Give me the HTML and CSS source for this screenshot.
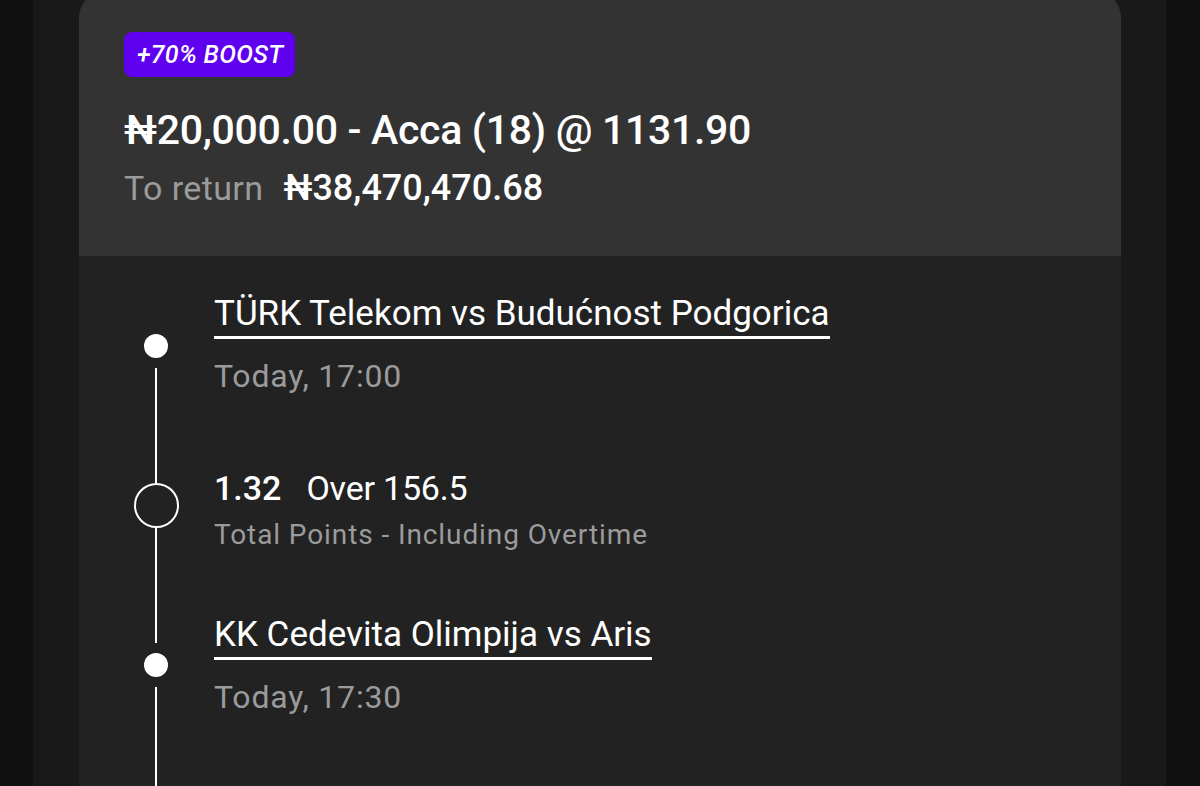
FILE: index.html
```html
<!DOCTYPE html>
<html lang="en">
<head>
<meta charset="utf-8">
<title>Bet receipt</title>
<link rel="stylesheet" href="styles.css">
</head>
<body>
<div class="frame">
  <div class="card">
    <header class="card-head">
      <span class="badge">+70% BOOST</span>
      <h1 class="title">₦20,000.00 - Acca (18) @ 1131.90</h1>
      <p class="return"><span class="return-label">To return</span><span class="return-value">₦38,470,470.68</span></p>
    </header>
    <div class="legs">
      <div class="leg leg-event1">
        <div class="rail">
          <span class="gap gap-top1"></span>
          <span class="dot"></span>
          <span class="gap gap-small"></span>
          <span class="line"></span>
        </div>
        <div class="content content-event1">
          <span class="event">TÜRK Telekom vs Budućnost Podgorica</span>
          <span class="time">Today, 17:00</span>
        </div>
      </div>
      <div class="leg leg-sel">
        <div class="rail">
          <span class="line line-fixed1"></span>
          <span class="ring"></span>
          <span class="line"></span>
        </div>
        <div class="content content-sel">
          <span class="pick"><b class="odds">1.32</b><span class="outcome">Over 156.5</span></span>
          <span class="market">Total Points - Including Overtime</span>
        </div>
      </div>
      <div class="leg leg-event2">
        <div class="rail">
          <span class="line line-fixed2"></span>
          <span class="gap gap-small"></span>
          <span class="dot"></span>
          <span class="gap gap-small"></span>
          <span class="line"></span>
        </div>
        <div class="content content-event2">
          <span class="event">KK Cedevita Olimpija vs Aris</span>
          <span class="time">Today, 17:30</span>
        </div>
      </div>
    </div>
  </div>
</div>
</body>
</html>
```
FILE: styles.css
```css
* { box-sizing: border-box; }
html, body { margin: 0; padding: 0; }
body {
  background: #111111;
  font-family: Roboto, "Liberation Sans", sans-serif;
  color: #ffffff;
  height: 786px;
  overflow: hidden;
}
.frame {
  display: flow-root;
  margin: 0 34px 0 33px;
  background: #191919;
  height: 786px;
  padding: 0 45px 0 46px;
}
.card {
  margin-top: -10px;
  border-radius: 28px 28px 0 0;
  overflow: hidden;
  background: #222222;
  height: 820px;
}
.card-head {
  background: #333333;
  height: 266px;
  padding: 42px 45px 0 45px;
}
.badge {
  display: inline-flex;
  align-items: center;
  height: 45px;
  padding: 0 12px 0 13px;
  background: #5f00ef;
  border-radius: 8px;
  font-style: italic;
  font-weight: 500;
  font-size: 25px;
  letter-spacing: 0.3px;
  color: #ffffff;
}
.title {
  margin: 29px 0 0 0;
  font-size: 41px;
  line-height: 48px;
  font-weight: 500;
  letter-spacing: -0.3px;
}
.return {
  margin: 14px 0 0 0;
  line-height: 40px;
  display: flex;
  align-items: baseline;
  gap: 20px;
}
.return-label { color: #9b9b9b; font-weight: 400; font-size: 34px; letter-spacing: 0.4px; }
.return-value { font-weight: 500; font-size: 36px; letter-spacing: 0; }

.legs { display: flex; flex-direction: column; }
.leg {
  display: grid;
  grid-template-columns: 135px 1fr;
}
.leg-event1 { height: 184px; }
.leg-sel { height: 140px; }
.leg-event2 { height: 240px; }
.rail {
  display: flex;
  flex-direction: column;
  align-items: center;
  padding-left: 19px;
}
.gap { display: block; flex: none; }
.gap-top1 { height: 78px; }
.gap-small { height: 10px; }
.dot {
  display: block;
  flex: none;
  width: 24px;
  height: 24px;
  border-radius: 50%;
  background: #ffffff;
}
.ring {
  display: block;
  flex: none;
  width: 45px;
  height: 45px;
  border-radius: 50%;
  border: 2.5px solid #ffffff;
}
.line {
  display: block;
  flex: 1;
  width: 2px;
  background: #ffffff;
}
.line-fixed1 { flex: none; height: 43px; }
.line-fixed2 { flex: none; height: 63px; }

.content { display: flex; flex-direction: column; align-items: flex-start; }
.event {
  font-size: 35px;
  line-height: 40px;
  padding-bottom: 2px;
  border-bottom: 3px solid #ffffff;
  letter-spacing: 0;
}
.time {
  margin-top: 19px;
  font-size: 32px;
  line-height: 36px;
  color: #9b9b9b;
  letter-spacing: 0.8px;
}
.content-event1 { padding-top: 38px; }
.content-sel { padding-top: 28px; }
.pick { font-size: 34px; line-height: 40px; display: flex; gap: 25px; }
.odds { font-weight: 500; }
.outcome { font-weight: 400; letter-spacing: -0.2px; }
.market {
  margin-top: 10px;
  font-size: 28px;
  line-height: 34px;
  color: #9b9b9b;
  letter-spacing: 0.9px;
}
.content-event2 { padding-top: 35px; }
```
